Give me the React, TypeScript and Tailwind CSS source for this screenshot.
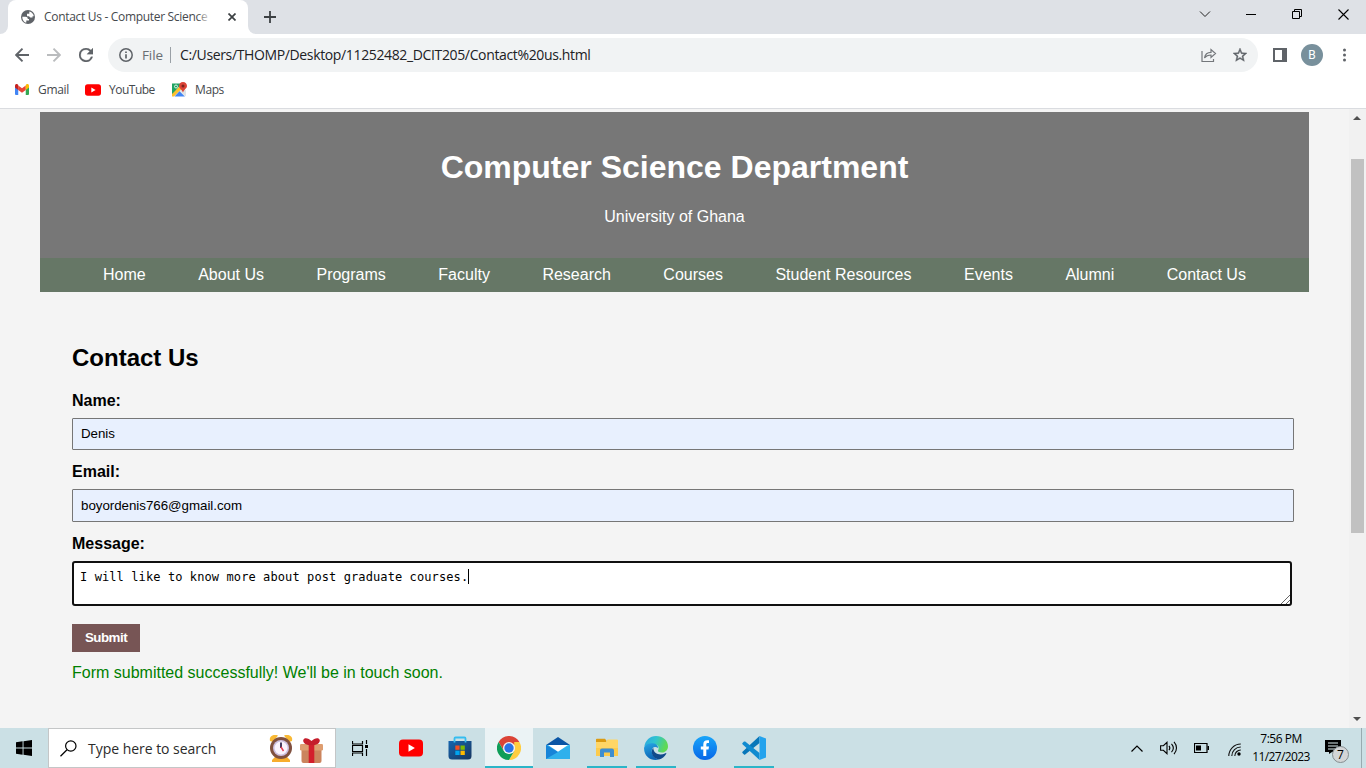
import React from "react";

const UI = "font-['Open_Sans','Noto_Sans',sans-serif]";

const GlobeIcon = () => (
  <svg width="14" height="14" viewBox="0 0 14 14">
    <circle cx="7" cy="7" r="7" fill="#5f6368" />
    <path d="M1.300 6.800h3.200c1.400 0 2.300.9 2.300 2.200H8v1.400H5.300v2H4.200C2.300 11.400 1.200 9.200 1.300 6.800z" fill="#fff" />
    <path d="M8.300 1.500c2.400.5 4.200 2.300 4.500 4.700h-1.300V7.500H9.200L8 6.300H6V3.700h2.300z" fill="#fff" />
  </svg>
);

const YouTube = ({ w, h }: { w: number; h: number }) => (
  <svg width={w} height={h} viewBox="0 0 24 17">
    <rect width="24" height="17" rx="4" fill="#f00" />
    <path d="M9.500 4.800v7.400l6.400-3.700z" fill="#fff" />
  </svg>
);

const GmailIcon = () => (
  <svg width="14" height="11" viewBox="0 0 28 22">
    <path d="M0 4v16a2 2 0 0 0 2 2h4.500V8z" fill="#4285f4" />
    <path d="M28 4v16a2 2 0 0 1-2 2h-4.500V8z" fill="#34a853" />
    <path d="M6.500 3v9L14 17.500 21.500 12V3L14 8.500z" fill="#ea4335" />
    <path d="M0 3C0 .5 3-1 5 .7L6.500 2v10L0 7z" fill="#c5221f" />
    <path d="M28 3c0-2.500-3-4-5-2.300L21.500 2v10L28 7z" fill="#fbbc04" />
  </svg>
);

const MapsIcon = () => (
  <svg width="15" height="15" viewBox="0 0 30 30">
    <path d="M0 3h19L2 25H0z" fill="#1fa463" />
    <path d="M5 29 15 18l11 11z" fill="#4285f4" />
    <path d="M15 18l7-6 6 5v10l-2 2z" fill="#dfe3e6" />
    <path d="M0 24 16 8l5 4L4 29H0z" fill="#fbc02d" />
    <circle cx="8" cy="9" r="3" fill="none" stroke="#fff" strokeWidth="1.600" />
    <path d="M22 0c-5 0-8 3.500-8 8 0 5 6 7 8 13 2-6 8-8 8-13 0-4.500-3-8-8-8z" fill="#db4437" />
    <circle cx="22" cy="8" r="3" fill="#7b231e" />
  </svg>
);

const ChromeIcon = () => (
  <svg width="24" height="24" viewBox="0 0 24 24">
    <path d="M12 12 1.600 6A12 12 0 0 1 22.400 6z" fill="#db4437" />
    <path d="M22.400 6A12 12 0 0 1 12 24l5.200-9V6z" fill="#ffcd40" />
    <path d="M1.600 6 6.800 15 12 12V6z" fill="#db4437" />
    <path d="M1.600 6 6.800 15 12 18l5.200-3L12 24A12 12 0 0 1 1.600 6z" fill="#0f9d58" />
    <circle cx="12" cy="12" r="6" fill="#f5f5f5" />
    <circle cx="12" cy="12" r="4.700" fill="#2a72e8" />
  </svg>
);

const StoreIcon = () => (
  <svg width="24" height="24" viewBox="0 0 24 24">
    <defs>
      <linearGradient id="bag" x1="0" y1="0" x2="1" y2="1">
        <stop offset="0" stopColor="#1565ae" />
        <stop offset="1" stopColor="#173660" />
      </linearGradient>
    </defs>
    <path d="M.5 5h23v15a3.500 3.500 0 0 1-3.500 3.500H4A3.500 3.500 0 0 1 .5 20z" fill="url(#bag)" />
    <path d="M6.500 6.500V2.500a1 1 0 0 1 1-1h9a1 1 0 0 1 1 1v4" fill="none" stroke="#35bdf0" strokeWidth="1.800" />
    <path d="M7.300 9.500h4.300v4.300H7.300z" fill="#f25022" />
    <path d="M12.500 9.500h4.300v4.300h-4.300z" fill="#7fba00" />
    <path d="M7.300 14.700h4.300V19H7.300z" fill="#00a4ef" />
    <path d="M12.500 14.700h4.300V19h-4.300z" fill="#ffb900" />
  </svg>
);

const MailIcon = () => (
  <svg width="24" height="24" viewBox="0 0 24 24">
    <defs>
      <linearGradient id="env" x1="0" y1="1" x2="1" y2="0">
        <stop offset="0" stopColor="#1683dc" />
        <stop offset="1" stopColor="#3ccbf4" />
      </linearGradient>
    </defs>
    <path d="M0 9 12 1l12 8v3H0z" fill="#0a55a5" />
    <path d="M0 9h24v14H0z" fill="url(#env)" />
    <path d="M0 9 24 23H0z" fill="#1784d8" />
    <path d="M0 23 24 9v14z" fill="#2fb0ec" />
    <path d="M2 9h20l-10 6.700z" fill="#fff" />
  </svg>
);

const FolderIcon = () => (
  <svg width="22" height="20" viewBox="0 0 22 20">
    <path d="M0 1.500A.8.800 0 0 1 .8.700H9l1.500 2V5H0z" fill="#dc9b12" />
    <path d="M0 4h10l1.500-2.500H21a1 1 0 0 1 1 1V18H0z" fill="#ffd666" />
    <path d="M0 10h22v8H0z" fill="#fccb4d" />
    <path d="M4 19v-6.500a2 2 0 0 1 2-2h10a2 2 0 0 1 2 2V19h-4v-4.500H8V19z" fill="#3e8ed0" />
  </svg>
);

const EdgeIcon = () => (
  <svg width="24" height="24" viewBox="0 0 24 24">
    <defs>
      <linearGradient id="edgeTop" x1="0" y1="0" x2="1" y2=".3">
        <stop offset="0" stopColor="#2aa5e2" />
        <stop offset=".5" stopColor="#30c4d0" />
        <stop offset="1" stopColor="#60d954" />
      </linearGradient>
      <linearGradient id="edgeLeft" x1="0" y1="0" x2=".3" y2="1">
        <stop offset="0" stopColor="#27a7e5" />
        <stop offset="1" stopColor="#0d65b5" />
      </linearGradient>
    </defs>
    <path d="M.3 11C1 4.500 6 0 12 0c7 0 12 4.800 12 10.200 0 4-3 6.300-6.200 6.300-3 0-4.500-1.100-3.700-2.300 1.500-2.500.2-5.700-4-5.900C5 7.800 2 9 .3 11z" fill="url(#edgeTop)" />
    <path d="M.1 11.500C1.500 8.500 5 7 8.800 7.300c3.500.2 5.400 2.700 5.400 4.700-4-2.500-6.700 0-6.400 3.500.3 4 3.500 7.300 7.200 8C7 25.500-.5 20.500.1 11.500z" fill="url(#edgeLeft)" />
    <path d="M9.300 12C6 15 8 22.500 15 23.400c3-.8 5.700-2.800 7.300-5.700.3-.6-.2-.8-.8-.5C16 20 9.500 18 9.300 12z" fill="#114a8b" />
  </svg>
);

const FacebookIcon = () => (
  <svg width="24" height="24" viewBox="0 0 24 24">
    <defs>
      <linearGradient id="fb" x1="0" y1="0" x2="0" y2="1">
        <stop offset="0" stopColor="#18a5f9" />
        <stop offset="1" stopColor="#0867e8" />
      </linearGradient>
    </defs>
    <circle cx="12" cy="12" r="12" fill="url(#fb)" />
    <path d="M10.300 20v-6.500H7.800v-3h2.500V8.400c0-2.700 1.500-4.100 3.900-4.100.9 0 1.800.1 1.800.1v2.700h-1.200c-1.200 0-1.500.7-1.500 1.500v1.900H16l-.5 3h-2.200V20z" fill="#fff" />
  </svg>
);

const CodeIcon = () => (
  <svg width="24" height="24" viewBox="0 0 24 24">
    <path d="M17.500 0v7L3.200 18.400c-.4.300-.9.300-1.200 0L.5 17c-.4-.4-.4-1 0-1.300z" fill="#0877b9" />
    <path d="M17.500 24v-7L3.200 5.600c-.4-.3-.9-.3-1.200 0L.5 7c-.4.400-.4 1 0 1.300z" fill="#108bd0" />
    <path d="M17.500 0 24 2.500v19L17.500 24z" fill="#24a3ed" />
  </svg>
);

const ClockIcon = () => (
  <svg width="24" height="29" viewBox="0 0 24 29">
    <path d="M1 7C0 3 3 0 9 1.500L4 8z" fill="#f9b934" />
    <path d="M23 7c1-4-2-7-8-5.500L20 8z" fill="#f9b934" />
    <path d="M6 23h12l3 3v2H3v-2z" fill="#f7ad2d" />
    <circle cx="12" cy="14" r="11" fill="#80503f" />
    <circle cx="12" cy="14" r="8" fill="#cdbfe0" />
    <circle cx="12" cy="14" r="6.500" fill="#faf3fd" />
    <path d="M12 8.500V14" fill="none" stroke="#30254c" strokeWidth="1.800" />
    <path d="m12 13 2.500 4" stroke="#e33b4f" strokeWidth="1.500" />
  </svg>
);

const GiftIcon = () => (
  <svg width="23" height="26" viewBox="0 0 23 26">
    <path d="M1.500 12h20v12a2 2 0 0 1-2 2h-16a2 2 0 0 1-2-2z" fill="#cb845d" />
    <rect y="7" width="23" height="6.500" rx="1.200" fill="#de9d70" />
    <path d="M8.700 7h5.600v19H8.700z" fill="#d31f2c" />
    <path d="M11.500 8C6 9 2 5 3.500 2.500S9 1.500 11.500 4C14 1.500 18 0 19.500 2.500S17 9 11.500 8z" fill="#c51d2b" />
  </svg>
);

const NAV = ["Home", "About Us", "Programs", "Faculty", "Research", "Courses", "Student Resources", "Events", "Alumni", "Contact Us"];

const apps: { icon: React.ReactNode; cls: string; bar: string }[] = [
  { icon: <YouTube w={24} h={18} />, cls: "", bar: "" },
  { icon: <StoreIcon />, cls: "", bar: "" },
  { icon: <ChromeIcon />, cls: "bg-[#ebf3f5]", bar: "w-12 bg-[#2bb5c8]" },
  { icon: <MailIcon />, cls: "", bar: "" },
  { icon: <FolderIcon />, cls: "", bar: "w-10 bg-[#2bb5c8]" },
  { icon: <EdgeIcon />, cls: "", bar: "w-10 bg-[#2bb5c8]" },
  { icon: <FacebookIcon />, cls: "", bar: "" },
  { icon: <CodeIcon />, cls: "", bar: "w-10 bg-[#2bb5c8]" },
];

function TabStrip() {
  return (
    <div className="flex h-[34px] bg-[#dee1e6]">
      <div className="flex w-2 items-end bg-white">
        <div className="h-full w-2 rounded-br-lg bg-[#dee1e6]" />
      </div>
      <div className="flex h-[34px] w-60 items-center rounded-t-lg bg-white pl-[13px]">
        <GlobeIcon />
        <div className={`relative ml-[9px] w-[173px] text-[12px] leading-4 tracking-[-0.310px] whitespace-nowrap text-[#45494d] ${UI}`}>
          Contact Us - Computer Science D
          <div className="absolute inset-y-0 -right-1 w-6 bg-gradient-to-r from-transparent to-white to-60%" />
        </div>
        <svg className="ml-[11px]" width="8" height="8" viewBox="0 0 8 8">
          <path d="m.5.5 7 7m0-7-7 7" stroke="#3c4043" strokeWidth="1.700" />
        </svg>
      </div>
      <div className="w-2 bg-white">
        <div className="h-full w-2 rounded-bl-lg bg-[#dee1e6]" />
      </div>
      <svg className="mt-[11px] ml-2" width="12" height="12" viewBox="0 0 12 12">
        <path d="M6 0v12M0 6h12" stroke="#3c4043" strokeWidth="1.800" />
      </svg>
      <div className="ml-auto flex h-7 items-center pr-[17px]">
        <svg width="12" height="8" viewBox="0 0 12 8"><path d="m1 1.500 5 5 5-5" fill="none" stroke="#222" /></svg>
        <svg className="ml-[35px]" width="10" height="10" viewBox="0 0 10 10"><path d="M0 5.500h10" stroke="#000" /></svg>
        <svg className="ml-9" width="10" height="10" viewBox="0 0 10 10"><path d="M.5 2.500h7v7h-7zM2.500 2.500v-2h7v7h-2" fill="none" stroke="#000" /></svg>
        <svg className="ml-9" width="11" height="11" viewBox="0 0 11 11"><path d="m.5.5 10 10m0-10-10 10" stroke="#000" strokeWidth="1.100" /></svg>
      </div>
    </div>
  );
}

function Toolbar() {
  return (
    <div className="flex h-[42px] items-center bg-white pl-[15px]">
      <svg width="14" height="14" viewBox="0 0 14 14"><path d="M14 7H1M7.500.700 1.200 7l6.300 6.300" fill="none" stroke="#5f6368" strokeWidth="1.900" /></svg>
      <svg className="ml-[18px]" width="14" height="14" viewBox="0 0 14 14"><path d="M0 7h13M6.500.700 12.800 7l-6.300 6.300" fill="none" stroke="#babcbe" strokeWidth="1.900" /></svg>
      <svg className="ml-[18px]" width="14" height="14" viewBox="4 4 16 16"><path fill="#5f6368" d="M17.650 6.350A7.960 7.960 0 0 0 12 4a8 8 0 1 0 7.730 10h-2.080A6 6 0 1 1 12 6c1.660 0 3.140.690 4.220 1.780L13 11h7V4z" stroke="#5f6368" strokeWidth=".3" /></svg>
      <div className="ml-[15px] flex h-[34px] w-[1150px] items-center rounded-full bg-[#f1f3f4] pl-[11px]">
        <svg width="14" height="14" viewBox="0 0 14 14"><circle cx="7" cy="7" r="6.200" fill="none" stroke="#5f6368" strokeWidth="1.500" /><path d="M7 6.200v4.300M7 3.500v1.600" stroke="#5f6368" strokeWidth="1.700" /></svg>
        <span className={`ml-[9px] w-[21px] text-[13.500px] leading-5 tracking-[-0.100px] text-[#6a6e73] ${UI}`}>File</span>
        <span className="ml-[7px] h-4 w-px bg-[#9aa0a6]" />
        <span className={`ml-[9px] text-[14px] leading-5 tracking-[-0.360px] whitespace-nowrap text-[#202124] ${UI}`}>C:/Users/THOMP/Desktop/11252482_DCIT205/Contact%20us.html</span>
        <svg className="ml-auto" width="16" height="15" viewBox="0 0 16 15"><path d="M1 3v10.500h11.500V11M3.500 10c.5-3.500 3-5.700 6.500-5.700V1.500l4.500 4-4.500 4V7C7 7 5 8 3.500 10z" fill="none" stroke="#74777b" strokeWidth="1.200" /></svg>
        <svg className="mr-[11px] ml-4" width="14" height="14" viewBox="2 2 20 20"><path fill="#5f6368" stroke="#5f6368" strokeWidth=".6" d="m22 9.240-7.190-.620L12 2 9.190 8.630 2 9.240l5.460 4.730L5.820 21 12 17.270 18.180 21l-1.630-7.030L22 9.240zM12 15.400l-3.760 2.270 1-4.280-3.320-2.880 4.380-.380L12 6.100l1.710 4.040 4.380.380-3.320 2.880 1 4.280L12 15.400z" /></svg>
      </div>
      <svg className="ml-[15px]" width="14" height="14" viewBox="0 0 14 14"><path d="M0 0h14v14H0zM2 2v10h7V2z" fill="#5f6368" fillRule="evenodd" /></svg>
      <div className="ml-[14px] flex size-[22px] items-center justify-center rounded-full bg-[#78909c] font-['Roboto',sans-serif] text-[12px] leading-none text-white">B</div>
      <svg className="ml-[20px]" width="4" height="14" viewBox="0 0 4 14"><g fill="#5f6368"><circle cx="1.500" cy="2" r="1.500" /><circle cx="1.500" cy="7" r="1.500" /><circle cx="1.500" cy="12" r="1.500" /></g></svg>
    </div>
  );
}

function Bookmarks() {
  return (
    <div className={`flex h-[33px] items-center border-b border-[#dadce0] bg-white pb-[5px] pl-[15px] text-[12px] text-[#45494d] ${UI}`}>
      <GmailIcon />
      <span className="ml-[9px] w-[31px] tracking-[-0.300px]">Gmail</span>
      <span className="ml-[16px]"><YouTube w={16} h={12} /></span>
      <span className="ml-[8px] w-[46px] tracking-[-0.500px]">YouTube</span>
      <span className="ml-[17px]"><MapsIcon /></span>
      <span className="ml-[8px] tracking-[-0.400px]">Maps</span>
    </div>
  );
}

function Page() {
  return (
    <div className="flex h-[619px] bg-[#f4f4f4] font-['Liberation_Sans',Arial,sans-serif]">
      <div className="w-[1349px] pt-[3px] pr-10 pl-10">
        <header className="h-[146px] bg-[#777] pt-[37px] text-center text-white">
          <h1 className="text-[32px] leading-[37px] font-bold">Computer Science Department</h1>
          <p className="mt-[22px] text-base leading-[18px]">University of Ghana</p>
        </header>
        <nav className="flex h-[34px] justify-between bg-[#667766] px-[63px] pt-[8px] text-base leading-[18px] text-white">
          {NAV.map((n) => <a key={n}>{n}</a>)}
        </nav>
        <main className="flex flex-col items-start pt-[52px] pl-8 text-black">
          <h2 className="text-2xl leading-[28px] font-bold">Contact Us</h2>
          <label className="mt-[20px] text-base leading-[18px] font-bold">Name:</label>
          <div className="mt-2 h-8 w-[1222px] rounded-[1px] border border-[#767676] bg-[#e8f0fe] pl-2 text-[13.333px] leading-[30px] tracking-[-0.030px]">Denis</div>
          <label className="mt-[13px] text-base leading-[18px] font-bold">Email:</label>
          <div className="mt-2 h-[33px] w-[1222px] rounded-[1px] border border-[#767676] bg-[#e8f0fe] pl-2 text-[13.333px] leading-[31px] tracking-[-0.030px]">boyordenis766@gmail.com</div>
          <label className="mt-[13px] text-base leading-[18px] font-bold">Message:</label>
          <div className="mt-[8px] flex h-[45px] w-[1220px] rounded-[3px] border-2 border-[#101010] bg-white pt-[6px] pl-[6px]">
            <span className="font-['DejaVu_Sans_Mono',monospace] text-[12px] leading-4 tracking-[0.100px]">I will like to know more about post graduate courses.</span>
            <span className="h-[15px] w-px bg-black" />
            <svg className="mt-auto ml-auto" width="10" height="9" viewBox="0 0 10 9"><path d="m1 9 9-9M6 9l4-4" stroke="#666" strokeWidth="1" /></svg>
          </div>
          <div className="mt-[18px] h-7 w-[68px] bg-[#775555] text-center text-[13.333px] leading-[27px] font-bold tracking-[-0.500px] text-white">Submit</div>
          <p className="mt-[12px] text-base leading-[18px] text-[#008000]">Form submitted successfully! We'll be in touch soon.</p>
        </main>
      </div>
      <div className="flex w-[17px] flex-col items-center bg-[#f1f1f1] py-[7px]">
        <svg className="mr-px" width="8" height="4" viewBox="0 0 8 4"><path d="M0 4 4 0l4 4z" fill="#505050" /></svg>
        <div className="mt-[39px] h-[374px] w-[13px] bg-[#c1c1c1]" />
        <svg className="mt-auto mr-px" width="8" height="4" viewBox="0 0 8 4"><path d="M0 0h8L4 4z" fill="#505050" /></svg>
      </div>
    </div>
  );
}

function Taskbar() {
  return (
    <div className={`flex h-10 bg-[#cbe0e5] text-black ${UI}`}>
      <div className="flex w-12 items-center justify-center">
        <svg width="16" height="16" viewBox="0 0 16 16"><path d="M0 2.300 6.600 1.300v6.300H0zM7.500 1.200 16 0v7.600H7.500zM0 8.500h6.600v6.200L0 13.800zM7.500 8.500H16V16l-8.500-1.200z" /></svg>
      </div>
      <div className="flex h-10 w-72 items-center border border-[#c4c6c7] bg-white pl-[11px]">
        <svg width="17" height="17" viewBox="0 0 17 17"><circle cx="10.800" cy="6" r="5.200" fill="none" stroke="#000" strokeWidth="1.200" /><path d="M7 9.800.5 16.300" stroke="#000" strokeWidth="1.300" /></svg>
        <span className="mt-px ml-[11px] w-[128px] text-[14px] leading-5 tracking-[-0.030px] whitespace-nowrap text-[#2b2b2b]">Type here to search</span>
        <span className="ml-[53px]"><ClockIcon /></span>
        <span className="mt-[3px] ml-[7px]"><GiftIcon /></span>
      </div>
      <div className="flex w-[51px] items-center pl-[16px]">
        <svg width="17" height="17" viewBox="0 0 17 17"><path d="M.5 1v3h10V1M.5 16v-3h10v3M.5 5.500h10v6H.5zM14.500 0v4M14.500 9v7" fill="none" stroke="#000" strokeWidth="1.200" /><path d="M13 5h3v3h-3z" /></svg>
      </div>
      <div className="flex gap-px">
        {apps.map((a, i) => (
          <div key={i} className={`flex w-12 flex-col items-center ${a.cls}`}>
            <div className="flex h-[38px] items-center pt-[2px]">{a.icon}</div>
            <div className={`h-[2px] ${a.bar}`} />
          </div>
        ))}
      </div>
      <div className="ml-auto flex items-center">
        <svg width="12" height="7" viewBox="0 0 12 7"><path d="m.5 6.500 5.500-5.500 5.500 5.500" fill="none" stroke="#000" strokeWidth="1.200" /></svg>
        <svg className="ml-[17px]" width="18" height="14" viewBox="0 0 18 14"><path d="M.6 4.700h2.800L7 1.300v11.400L3.400 9.300H.6zM9 4.800c1 1.300 1 3.100 0 4.400M11.500 2.800c2.200 2.500 2.200 5.900 0 8.400M14 .800c3.300 3.600 3.300 8.800 0 12.400" fill="none" stroke="#000" strokeWidth="1.100" /></svg>
        <svg className="ml-4" width="15" height="10" viewBox="0 0 15 10"><path d="M.5.500h12.500v9H.5z" fill="none" stroke="#000" strokeWidth="1.200" /><path d="M2 2.500h5v5H2zM13.500 3H15v4h-1.500z" /></svg>
        <svg className="mt-[3px] ml-[19px]" width="13" height="13" viewBox="0 0 13 13"><path d="M.8 13A12 12 0 0 1 12.800 1M3.800 13a9 9 0 0 1 9-9M6.800 13a6 6 0 0 1 6-6" fill="none" stroke="#111" strokeWidth="1.100" /><circle cx="11" cy="11" r="1.700" /></svg>
        <div className="ml-[10px] w-[60px] text-center text-[12px] leading-[18px] whitespace-nowrap">
          <div className="tracking-[-0.500px]">7:56 PM</div>
          <div className="tracking-[-0.600px]">11/27/2023</div>
        </div>
        <div className="relative ml-[14px] h-6 w-[24px]">
          <svg width="16" height="18" viewBox="0 0 16 18"><path d="M0 4h16v12H7l-3 2v-2H0z" /><path d="M3 7h10M3 10h10M3 13h7" stroke="#dcebed" strokeWidth="1.200" /></svg>
          <div className="absolute top-[10px] left-[7px] flex size-[17px] items-center justify-center rounded-full border border-[#858d90] bg-[#d3d5d6] text-[12px] leading-none">7</div>
        </div>
        <div className="ml-[12px] h-10 w-px bg-[#98abb0]" />
        <div className="w-1" />
      </div>
    </div>
  );
}

export default function App() {
  return (
    <div className="h-[768px] w-[1366px] overflow-hidden bg-white">
      <TabStrip />
      <Toolbar />
      <Bookmarks />
      <Page />
      <Taskbar />
    </div>
  );
}
